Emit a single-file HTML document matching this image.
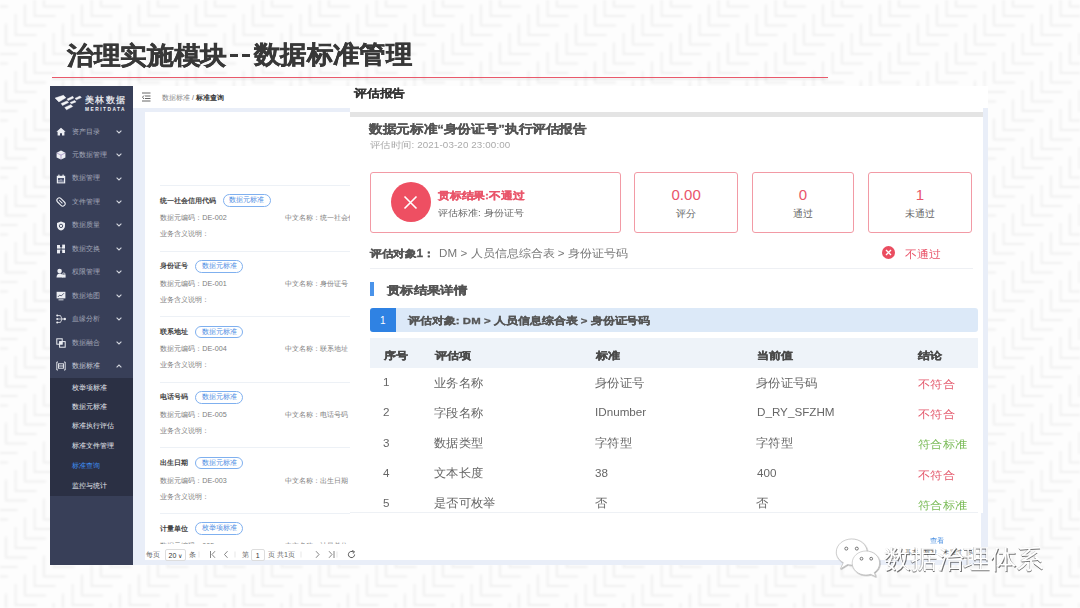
<!DOCTYPE html>
<html><head><meta charset="utf-8">
<style>
*{margin:0;padding:0;box-sizing:border-box}
html,body{width:1080px;height:608px;overflow:hidden;background:#fff;font-family:"Liberation Sans",sans-serif;position:relative}
.a{position:absolute;white-space:nowrap;line-height:1}
.b{font-weight:bold}
.bg{position:absolute;left:0;top:0}
.mi{position:absolute;left:71.5px;font-size:7px;color:#a3a8b8;line-height:1;white-space:nowrap}
.ic{position:absolute;left:55.5px}
.si{position:absolute;left:71.5px;font-size:7px;color:#e6e8ee;line-height:1;white-space:nowrap}
.it{position:absolute;left:160.3px;font-size:7px;color:#444;font-weight:bold;line-height:1;white-space:nowrap}
.tg{position:absolute;height:12.7px;border:1px solid #7fb0ef;border-radius:7px;color:#4d8de3;font-size:7px;line-height:10.7px;padding:0 5.6px;white-space:nowrap}
.gr{position:absolute;font-size:7.2px;color:#7d7d7d;line-height:1;white-space:nowrap}
.sep{position:absolute;left:160.3px;width:190px;height:1px;background:#edf1f6}
.bx{position:absolute;top:171.5px;height:61px;border:1px solid #f29aa5;border-radius:3px}
.num{position:absolute;font-size:15px;color:#e9556a;line-height:1;text-align:center;width:100%}
.lb{position:absolute;font-size:9.5px;color:#666;line-height:1;text-align:center;width:100%}
.th{position:absolute;font-size:11px;color:#444;font-weight:bold;line-height:1;white-space:nowrap}
.td{position:absolute;font-size:11.5px;color:#666;line-height:1;white-space:nowrap}
.no{color:#e45a6d}
.ok{color:#7abb57}
</style></head><body>

<svg class="bg" width="1080" height="608" viewBox="0 0 1080 608"><defs><filter id="bl"><feGaussianBlur stdDeviation="1"/></filter><pattern id="zz" x="-3.5" y="-3" width="57" height="57" patternUnits="userSpaceOnUse"><g fill="none" stroke="#f0f0f0" stroke-width="2.2"><path d="M0.0 36.0 V57.0 H21.0 M9.5 26.5 V47.5 H30.5 M19.0 17.0 V38.0 H40.0 M28.5 7.5 V28.5 H49.5 M38.0 -2.0 V19.0 H59.0 M47.5 -11.5 V9.5 H68.5" transform="translate(-57,-57)"/><path d="M0.0 36.0 V57.0 H21.0 M9.5 26.5 V47.5 H30.5 M19.0 17.0 V38.0 H40.0 M28.5 7.5 V28.5 H49.5 M38.0 -2.0 V19.0 H59.0 M47.5 -11.5 V9.5 H68.5" transform="translate(-57,0)"/><path d="M0.0 36.0 V57.0 H21.0 M9.5 26.5 V47.5 H30.5 M19.0 17.0 V38.0 H40.0 M28.5 7.5 V28.5 H49.5 M38.0 -2.0 V19.0 H59.0 M47.5 -11.5 V9.5 H68.5" transform="translate(-57,57)"/><path d="M0.0 36.0 V57.0 H21.0 M9.5 26.5 V47.5 H30.5 M19.0 17.0 V38.0 H40.0 M28.5 7.5 V28.5 H49.5 M38.0 -2.0 V19.0 H59.0 M47.5 -11.5 V9.5 H68.5" transform="translate(0,-57)"/><path d="M0.0 36.0 V57.0 H21.0 M9.5 26.5 V47.5 H30.5 M19.0 17.0 V38.0 H40.0 M28.5 7.5 V28.5 H49.5 M38.0 -2.0 V19.0 H59.0 M47.5 -11.5 V9.5 H68.5" transform="translate(0,0)"/><path d="M0.0 36.0 V57.0 H21.0 M9.5 26.5 V47.5 H30.5 M19.0 17.0 V38.0 H40.0 M28.5 7.5 V28.5 H49.5 M38.0 -2.0 V19.0 H59.0 M47.5 -11.5 V9.5 H68.5" transform="translate(0,57)"/><path d="M0.0 36.0 V57.0 H21.0 M9.5 26.5 V47.5 H30.5 M19.0 17.0 V38.0 H40.0 M28.5 7.5 V28.5 H49.5 M38.0 -2.0 V19.0 H59.0 M47.5 -11.5 V9.5 H68.5" transform="translate(57,-57)"/><path d="M0.0 36.0 V57.0 H21.0 M9.5 26.5 V47.5 H30.5 M19.0 17.0 V38.0 H40.0 M28.5 7.5 V28.5 H49.5 M38.0 -2.0 V19.0 H59.0 M47.5 -11.5 V9.5 H68.5" transform="translate(57,0)"/><path d="M0.0 36.0 V57.0 H21.0 M9.5 26.5 V47.5 H30.5 M19.0 17.0 V38.0 H40.0 M28.5 7.5 V28.5 H49.5 M38.0 -2.0 V19.0 H59.0 M47.5 -11.5 V9.5 H68.5" transform="translate(57,57)"/></g></pattern></defs><rect width="1080" height="608" fill="#fdfdfd"/><rect width="1080" height="608" fill="url(#zz)" filter="url(#bl)"/></svg>
<div class="a" style="left:67.04px;top:43.66px;font-size:24.633px;letter-spacing:0px;transform-origin:0 0;transform:scaleX(1.0663);font-weight:bold;color:#383838;-webkit-text-stroke:0.45px #383838;">治理实施模块</div>
<div class="a" style="left:253.8px;top:42.18px;font-size:25.123px;letter-spacing:0px;transform-origin:0 0;transform:scaleX(1.0543);font-weight:bold;color:#383838;-webkit-text-stroke:0.45px #383838;">数据标准管理</div>
<div class="a" style="left:230px;top:54.1px;width:7.9px;height:3.1px;background:#383838"></div>
<div class="a" style="left:241.9px;top:54.1px;width:8px;height:3.1px;background:#383838"></div>
<div class="a" style="left:52px;top:77.1px;width:776px;height:1.4px;background:#e9596b;box-shadow:0 1.5px 2px rgba(0,0,0,0.12)"></div>
<div class="a" style="left:50px;top:86px;width:83px;height:479px;background:#383f58"></div>
<div class="a" style="left:50px;top:378px;width:83px;height:118px;background:#2b3044"></div>
<div class="a" style="left:133px;top:86px;width:855px;height:22px;background:#fff"></div>
<div class="a" style="left:133px;top:108px;width:855px;height:457px;background:#e9eef8"></div>
<div class="a" style="left:144.5px;top:111.7px;width:836px;height:448.3px;background:#fff"></div>
<svg class="a" style="left:53px;top:92px" width="30" height="20" viewBox="0 0 30 20">
<g fill="#f4f5f8" stroke="#f4f5f8" stroke-width="0.5" stroke-linejoin="round">
<polygon points="2.1,6.1 10.5,3.3 12.8,5.8 5.9,9.9"/>
<polygon points="14.1,7.1 19.7,4.3 20.6,6.1 15,8.6"/>
<polygon points="22,6.4 27,4.1 28.3,5.6 23.4,7.7"/>
<polygon points="8.2,11.5 14.1,8.9 15.5,10.5 9.5,13.5"/>
<polygon points="17.1,10.5 21.7,8.4 23,9.9 18.4,11.7"/>
<polygon points="11.8,15.5 17.9,12.7 19.7,14.5 13.5,17.8"/>
</g></svg>
<div class="a" style="left:85px;top:96.4px;font-size:8.6px;letter-spacing:1.4px;color:#f2f3f6;-webkit-text-stroke:0.2px #f2f3f6">美林数据</div>
<div class="a b" style="left:85px;top:107.8px;font-size:4.8px;letter-spacing:1.5px;color:#f2f3f6">MERITDATA</div>
<div class="mi" style="top:127.7px;color:#a3a8b8">资产目录</div>
<svg class="ic" style="top:127px" width="10" height="10" viewBox="0 0 10 10"><path d="M5 0.8 L9.6 4.8 L8.4 4.8 L8.4 8.6 L6 8.6 L6 6.2 L4 6.2 L4 8.6 L1.6 8.6 L1.6 4.8 L0.4 4.8 Z" fill="#eceef3"/></svg>
<svg class="a" style="left:115.5px;top:129.8px" width="6" height="4" viewBox="0 0 6 4"><path d="M0.6 0.6 L3 3 L5.4 0.6" stroke="#d3d6de" stroke-width="1.1" fill="none"/></svg>
<div class="mi" style="top:151.0px;color:#a3a8b8">元数据管理</div>
<svg class="ic" style="top:150.3px" width="10" height="10" viewBox="0 0 10 10"><polygon points="5,0.6 9.4,2.8 9.4,7.4 5,9.6 0.6,7.4 0.6,2.8" fill="#eceef3"/><path d="M0.8 3 L5 5.1 L9.2 3 M5 5.1 L5 9.4" stroke="#8a6fb0" stroke-width="0.6" fill="none"/></svg>
<svg class="a" style="left:115.5px;top:153.10000000000002px" width="6" height="4" viewBox="0 0 6 4"><path d="M0.6 0.6 L3 3 L5.4 0.6" stroke="#d3d6de" stroke-width="1.1" fill="none"/></svg>
<div class="mi" style="top:174.39999999999998px;color:#a3a8b8">数据管理</div>
<svg class="ic" style="top:173.7px" width="10" height="10" viewBox="0 0 10 10"><rect x="0.8" y="1.8" width="8.4" height="7.6" fill="#eceef3"/><rect x="2" y="4" width="6" height="4.3" fill="#4a5270"/><rect x="2.3" y="0.6" width="1.2" height="2" fill="#eceef3"/><rect x="6.5" y="0.6" width="1.2" height="2" fill="#eceef3"/><path d="M3 7.8 L3 6 M5 7.8 L5 5.2 M7 7.8 L7 6.5" stroke="#eceef3" stroke-width="0.8"/></svg>
<svg class="a" style="left:115.5px;top:176.5px" width="6" height="4" viewBox="0 0 6 4"><path d="M0.6 0.6 L3 3 L5.4 0.6" stroke="#d3d6de" stroke-width="1.1" fill="none"/></svg>
<div class="mi" style="top:197.89999999999998px;color:#a3a8b8">文件管理</div>
<svg class="ic" style="top:197.2px" width="10" height="10" viewBox="0 0 10 10"><g transform="rotate(-45 5 5)"><rect x="2.6" y="0.2" width="4.8" height="9.6" rx="2.4" fill="none" stroke="#eceef3" stroke-width="1.1"/><path d="M5 2.5 L5 7" stroke="#eceef3" stroke-width="1"/></g></svg>
<svg class="a" style="left:115.5px;top:200.0px" width="6" height="4" viewBox="0 0 6 4"><path d="M0.6 0.6 L3 3 L5.4 0.6" stroke="#d3d6de" stroke-width="1.1" fill="none"/></svg>
<div class="mi" style="top:221.2px;color:#a3a8b8">数据质量</div>
<svg class="ic" style="top:220.5px" width="10" height="10" viewBox="0 0 10 10"><path d="M5 0.5 L9 2 L9 5 C9 7.3 7.2 8.9 5 9.6 C2.8 8.9 1 7.3 1 5 L1 2 Z" fill="#eceef3"/><circle cx="5" cy="4.9" r="1.7" fill="none" stroke="#383f58" stroke-width="0.9"/></svg>
<svg class="a" style="left:115.5px;top:223.3px" width="6" height="4" viewBox="0 0 6 4"><path d="M0.6 0.6 L3 3 L5.4 0.6" stroke="#d3d6de" stroke-width="1.1" fill="none"/></svg>
<div class="mi" style="top:244.6px;color:#a3a8b8">数据交换</div>
<svg class="ic" style="top:243.9px" width="10" height="10" viewBox="0 0 10 10"><rect x="1" y="1" width="3.6" height="3.6" fill="#eceef3"/><rect x="5.6" y="0.6" width="3.4" height="4" fill="#eceef3"/><rect x="1" y="5.6" width="3.6" height="3.8" fill="#eceef3"/><rect x="5.6" y="5.6" width="3.4" height="3.4" fill="#eceef3"/><rect x="4" y="0" width="2.2" height="3" fill="#383f58"/><rect x="4" y="6.5" width="2.2" height="3.5" fill="#383f58"/></svg>
<svg class="a" style="left:115.5px;top:246.70000000000002px" width="6" height="4" viewBox="0 0 6 4"><path d="M0.6 0.6 L3 3 L5.4 0.6" stroke="#d3d6de" stroke-width="1.1" fill="none"/></svg>
<div class="mi" style="top:268.3px;color:#a3a8b8">权限管理</div>
<svg class="ic" style="top:267.6px" width="10" height="10" viewBox="0 0 10 10"><circle cx="3.6" cy="3" r="2.3" fill="#eceef3"/><path d="M0.5 9.6 C0.5 6.5 2 5.4 3.6 5.4 C5 5.4 6 6 6.5 7 L6.5 9.6 Z" fill="#eceef3"/><rect x="6" y="6.6" width="3.6" height="3" fill="#eceef3"/><path d="M6.8 6.8 L6.8 5.6 C6.8 4.6 8.8 4.6 8.8 5.6 L8.8 6.8" stroke="#eceef3" stroke-width="0.8" fill="none"/></svg>
<svg class="a" style="left:115.5px;top:270.40000000000003px" width="6" height="4" viewBox="0 0 6 4"><path d="M0.6 0.6 L3 3 L5.4 0.6" stroke="#d3d6de" stroke-width="1.1" fill="none"/></svg>
<div class="mi" style="top:291.8px;color:#a3a8b8">数据地图</div>
<svg class="ic" style="top:291.1px" width="10" height="10" viewBox="0 0 10 10"><rect x="0.6" y="0.8" width="8.8" height="6.6" fill="#eceef3"/><path d="M1.8 6 L3.8 4 L5.2 5 L8 2.2" stroke="#383f58" stroke-width="0.8" fill="none"/><rect x="2.5" y="8.4" width="5" height="0.9" fill="#eceef3"/></svg>
<svg class="a" style="left:115.5px;top:293.90000000000003px" width="6" height="4" viewBox="0 0 6 4"><path d="M0.6 0.6 L3 3 L5.4 0.6" stroke="#d3d6de" stroke-width="1.1" fill="none"/></svg>
<div class="mi" style="top:315.0px;color:#a3a8b8">血缘分析</div>
<svg class="ic" style="top:314.3px" width="10" height="10" viewBox="0 0 10 10"><circle cx="1.2" cy="1.6" r="1" fill="#eceef3"/><circle cx="1.2" cy="5" r="1" fill="#eceef3"/><circle cx="1.2" cy="8.4" r="1" fill="#eceef3"/><circle cx="8.8" cy="5" r="1.2" fill="#eceef3"/><path d="M1.2 1.6 L4.5 1.6 L6 5 L4.5 8.4 L1.2 8.4 M1.2 5 L8.8 5" stroke="#eceef3" stroke-width="0.8" fill="none"/></svg>
<svg class="a" style="left:115.5px;top:317.1px" width="6" height="4" viewBox="0 0 6 4"><path d="M0.6 0.6 L3 3 L5.4 0.6" stroke="#d3d6de" stroke-width="1.1" fill="none"/></svg>
<div class="mi" style="top:338.5px;color:#a3a8b8">数据融合</div>
<svg class="ic" style="top:337.8px" width="10" height="10" viewBox="0 0 10 10"><rect x="0.8" y="0.8" width="5.4" height="5.4" fill="none" stroke="#eceef3" stroke-width="1"/><rect x="3.6" y="3.6" width="5.6" height="5.6" fill="none" stroke="#eceef3" stroke-width="1"/><rect x="3.6" y="3.6" width="2.6" height="2.6" fill="#eceef3"/></svg>
<svg class="a" style="left:115.5px;top:340.6px" width="6" height="4" viewBox="0 0 6 4"><path d="M0.6 0.6 L3 3 L5.4 0.6" stroke="#d3d6de" stroke-width="1.1" fill="none"/></svg>
<div class="mi" style="top:361.7px;color:#c8ccd6">数据标准</div>
<svg class="ic" style="top:361px" width="10" height="10" viewBox="0 0 10 10"><path d="M2 1 L0.8 1 L0.8 9 L2 9 M8 1 L9.2 1 L9.2 9 L8 9" stroke="#eceef3" stroke-width="0.9" fill="none"/><rect x="2.5" y="2.8" width="5" height="4.4" fill="none" stroke="#eceef3" stroke-width="0.9"/><path d="M2.5 5 L7.5 5" stroke="#eceef3" stroke-width="0.9"/></svg>
<svg class="a" style="left:115.5px;top:363.8px" width="6" height="4" viewBox="0 0 6 4"><path d="M0.6 3.4 L3 1 L5.4 3.4" stroke="#d3d6de" stroke-width="1.1" fill="none"/></svg>
<div class="si" style="top:383.9px;color:#e6e8ee">枚举项标准</div>
<div class="si" style="top:402.8px;color:#e6e8ee">数据元标准</div>
<div class="si" style="top:422.3px;color:#e6e8ee">标准执行评估</div>
<div class="si" style="top:442.3px;color:#e6e8ee">标准文件管理</div>
<div class="si" style="top:462.2px;color:#3f8ef0">标准查询</div>
<div class="si" style="top:481.59999999999997px;color:#e6e8ee">监控与统计</div>
<svg class="a" style="left:141.5px;top:92px" width="9" height="10" viewBox="0 0 9 10"><path d="M0 1 L8.5 1 M3 4 L8.5 4 M3 6.5 L8.5 6.5 M0 9 L8.5 9 M2 3.5 L0.5 5.2 L2 7" stroke="#555" stroke-width="0.9" fill="none"/></svg>
<div class="a" style="left:162px;top:94.3px;font-size:7px;color:#888">数据标准 <span style="color:#666">/</span> <span style="color:#333;font-weight:bold">标准查询</span></div>
<div class="sep" style="top:185.0px"></div>
<div class="it" style="top:196.5px">统一社会信用代码</div>
<div class="tg" style="left:222.60000000000002px;top:194.3px">数据元标准</div>
<div class="gr" style="left:160.3px;top:214.10000000000002px">数据元编码：DE-002</div>
<div class="gr" style="left:285px;top:214.10000000000002px">中文名称：统一社会信</div>
<div class="gr" style="left:160.3px;top:230.20000000000002px">业务含义说明：</div>
<div class="sep" style="top:250.6px"></div>
<div class="it" style="top:262.09999999999997px">身份证号</div>
<div class="tg" style="left:195.20000000000002px;top:259.9px">数据元标准</div>
<div class="gr" style="left:160.3px;top:279.7px">数据元编码：DE-001</div>
<div class="gr" style="left:285px;top:279.7px">中文名称：身份证号</div>
<div class="gr" style="left:160.3px;top:295.8px">业务含义说明：</div>
<div class="sep" style="top:316.2px"></div>
<div class="it" style="top:327.7px">联系地址</div>
<div class="tg" style="left:195.20000000000002px;top:325.5px">数据元标准</div>
<div class="gr" style="left:160.3px;top:345.3px">数据元编码：DE-004</div>
<div class="gr" style="left:285px;top:345.3px">中文名称：联系地址</div>
<div class="gr" style="left:160.3px;top:361.40000000000003px">业务含义说明：</div>
<div class="sep" style="top:381.79999999999995px"></div>
<div class="it" style="top:393.3px">电话号码</div>
<div class="tg" style="left:195.20000000000002px;top:391.1px">数据元标准</div>
<div class="gr" style="left:160.3px;top:410.90000000000003px">数据元编码：DE-005</div>
<div class="gr" style="left:285px;top:410.90000000000003px">中文名称：电话号码</div>
<div class="gr" style="left:160.3px;top:427.0px">业务含义说明：</div>
<div class="sep" style="top:447.4px"></div>
<div class="it" style="top:458.9px">出生日期</div>
<div class="tg" style="left:195.20000000000002px;top:456.7px">数据元标准</div>
<div class="gr" style="left:160.3px;top:476.5px">数据元编码：DE-003</div>
<div class="gr" style="left:285px;top:476.5px">中文名称：出生日期</div>
<div class="gr" style="left:160.3px;top:492.59999999999997px">业务含义说明：</div>
<div class="sep" style="top:513.0px"></div>
<div class="it" style="top:524.5px">计量单位</div>
<div class="tg" style="left:195.20000000000002px;top:522.3px">枚举项标准</div>
<div class="gr" style="left:160.3px;top:542.0999999999999px">数据元编码：005</div>
<div class="gr" style="left:285px;top:542.0999999999999px">中文名称：计量单位</div>
<div class="a" style="left:144.5px;top:543.5px;width:211px;height:16.5px;background:#fff"></div>
<div class="gr" style="left:146px;top:550.5px;color:#666">每页</div>
<div class="a" style="left:164.5px;top:548.5px;width:21px;height:12px;border:1px solid #ddd;border-radius:2px;font-size:7px;color:#333;padding:2px 0 0 3px">20 <span style="font-size:6px">&#8744;</span></div>
<div class="gr" style="left:189px;top:550.5px;color:#666">条</div>
<svg class="a" style="left:196px;top:550px" width="150" height="9" viewBox="0 0 150 9"><g fill="none" stroke="#666" stroke-width="0.8"><path d="M14.5 1 V8 M19 1.2 L16 4.5 L19 7.8 M31.5 1.2 L28.5 4.5 L31.5 7.8 M120 1.2 L123 4.5 L120 7.8 M133 1.2 L136 4.5 L133 7.8 M138 1 V8"/></g><g stroke="#ddd" stroke-width="0.7"><path d="M3 1.5 V7.5 M39 1.5 V7.5 M105 1.5 V7.5 M141 1.5 V7.5"/></g></svg>
<div class="gr" style="left:241.5px;top:550.5px;color:#666">第</div>
<div class="a" style="left:251px;top:548.5px;width:13.5px;height:12px;border:1px solid #ddd;border-radius:2px;font-size:7px;color:#333;text-align:center;padding-top:2px">1</div>
<div class="gr" style="left:268px;top:550.5px;color:#666">页 共1页</div>
<div class="a" style="left:930px;top:538.3px;font-size:6.6px;color:#4a90e2;transform-origin:0 0;transform:scaleX(1.05)">查看</div>
<div class="a" style="left:905px;top:550px;font-size:5.5px;color:#666;letter-spacing:0.5px">基本&nbsp;&nbsp;&nbsp;标准&nbsp;&nbsp;&nbsp;未通过&nbsp;&nbsp;系</div>
<svg class="a" style="left:346.5px;top:550px" width="9" height="9" viewBox="0 0 9 9"><path d="M7.6 4.5 A3.1 3.1 0 1 1 6.3 2" fill="none" stroke="#444" stroke-width="0.9"/><path d="M5.2 0.6 L7.4 1.6 L6.2 3.6" fill="none" stroke="#444" stroke-width="0.9"/></svg>
<div class="a" style="left:350px;top:85.5px;width:638px;height:22.5px;background:#fff"></div>
<div class="a" style="left:350px;top:108px;width:633px;height:4px;background:#fff"></div>
<div class="a" style="left:350px;top:112px;width:633px;height:4.5px;background:#e4e4e4"></div>
<div class="a" style="left:350px;top:116.5px;width:633px;height:396.5px;background:#fff"></div>
<div class="a" style="left:354.3px;top:88.02px;font-size:11.155px;letter-spacing:0px;transform-origin:0 0;transform:scaleX(1.1638);font-weight:bold;color:#333;-webkit-text-stroke:0.1px #333;">评估报告</div>
<div class="a" style="left:368.95px;top:122.94px;font-size:11.618px;letter-spacing:0px;transform-origin:0 0;transform:scaleX(1.1365);font-weight:bold;color:#555;-webkit-text-stroke:0.3px #555;">数据元标准“身份证号”执行评估报告</div>
<div class="a" style="left:369.5px;top:140.51px;font-size:8.501px;letter-spacing:0px;transform-origin:0 0;transform:scaleX(1.1528);color:#aaa;">评估时间<span style="letter-spacing:0.1px">: 2021-03-20 23:00:00</span></div>
<div class="bx" style="left:369.6px;width:251px"></div>
<div class="a" style="left:390.6px;top:182px;width:40px;height:40px;border-radius:50%;background:#ee4f62"></div>
<svg class="a" style="left:403px;top:194.5px" width="15" height="15"><path d="M1.5 1.5 L13.5 13.5 M13.5 1.5 L1.5 13.5" stroke="#fff" stroke-width="1.6"/></svg>
<div class="a" style="left:438.0px;top:190.83px;font-size:9.88px;letter-spacing:0px;transform-origin:0 0;transform:scaleX(1.1775);font-weight:bold;color:#e9556a;-webkit-text-stroke:0.3px #e9556a;">贯标结果<span style="letter-spacing:0.1px">:</span>不通过</div>
<div class="a" style="left:438.24px;top:209.08px;font-size:8.782px;letter-spacing:0px;transform-origin:0 0;transform:scaleX(1.1143);color:#666;">评估标准<span style="letter-spacing:0.1px">: </span>身份证号</div>
<div class="bx" style="left:634.3px;width:103.70000000000005px"><div class="num" style="top:14px">0.00</div><div class="lb" style="top:36px">评分</div></div>
<div class="bx" style="left:751.7px;width:102.59999999999991px"><div class="num" style="top:14px">0</div><div class="lb" style="top:36px">通过</div></div>
<div class="bx" style="left:868px;width:103.70000000000005px"><div class="num" style="top:14px">1</div><div class="lb" style="top:36px">未通过</div></div>
<div class="a" style="left:370.16px;top:248.84px;font-size:10.111px;letter-spacing:0px;transform-origin:0 0;transform:scaleX(1.1621);font-weight:bold;color:#555;-webkit-text-stroke:0.3px #555;">评估对象<span style="letter-spacing:0.1px">1</span>：</div>
<div class="a" style="left:438.6px;top:247.88px;font-size:10.647px;letter-spacing:0px;transform-origin:0 0;transform:scaleX(1.0881);color:#777;"><span style="letter-spacing:0.1px">DM &gt; </span>人员信息综合表<span style="letter-spacing:0.1px"> &gt; </span>身份证号码</div>
<div class="a" style="left:904.85px;top:248.6px;font-size:11.278px;letter-spacing:0px;transform-origin:0 0;transform:scaleX(1.0859);color:#e9556a;">不通过</div>
<div class="a" style="left:881.6px;top:246px;width:13.4px;height:13.4px;border-radius:50%;background:#ea4d60"></div>
<svg class="a" style="left:884.8px;top:249.2px" width="7" height="7"><path d="M1 1 L6 6 M6 1 L1 6" stroke="#fff" stroke-width="1.4"/></svg>
<div class="a" style="left:369.5px;top:268px;width:603px;height:1px;background:#eef0f4"></div>
<div class="a" style="left:369.5px;top:282.4px;width:4.4px;height:13.3px;background:#4a93ea"></div>
<div class="a" style="left:386.96px;top:285.17px;font-size:11.435px;letter-spacing:0px;transform-origin:0 0;transform:scaleX(1.2159);font-weight:bold;color:#555;-webkit-text-stroke:0.3px #555;">贯标结果详情</div>
<div class="a" style="left:369.5px;top:308.2px;width:608.4px;height:23.7px;background:#dce9f8;border-radius:3px"></div>
<div class="a" style="left:369.5px;top:308.2px;width:26.6px;height:23.7px;background:#2f82e3;border-radius:3px 0 0 3px;color:#fff;font-size:10px;text-align:center;padding-top:8.2px">1</div>
<div class="a" style="left:369.5px;top:338.4px;width:608.4px;height:29.7px;background:#eef3f9"></div>
<div class="a" style="left:408.16px;top:316.4px;font-size:9.557px;letter-spacing:0px;transform-origin:0 0;transform:scaleX(1.191);font-weight:bold;color:#555;-webkit-text-stroke:0.3px #555;">评估对象<span style="letter-spacing:0.1px">: DM &gt; </span>人员信息综合表<span style="letter-spacing:0.1px"> &gt; </span>身份证号码</div>
<div class="a" style="left:383.6px;top:350.56px;font-size:10.102px;letter-spacing:0px;transform-origin:0 0;transform:scaleX(1.2029);font-weight:bold;color:#4a4a4a;-webkit-text-stroke:0.3px #4a4a4a;">序号</div>
<div class="a" style="left:434.8px;top:350.56px;font-size:10.102px;letter-spacing:0px;transform-origin:0 0;transform:scaleX(1.2029);font-weight:bold;color:#4a4a4a;-webkit-text-stroke:0.3px #4a4a4a;">评估项</div>
<div class="a" style="left:595.6px;top:350.56px;font-size:10.102px;letter-spacing:0px;transform-origin:0 0;transform:scaleX(1.2029);font-weight:bold;color:#4a4a4a;-webkit-text-stroke:0.3px #4a4a4a;">标准</div>
<div class="a" style="left:757.0px;top:350.56px;font-size:10.102px;letter-spacing:0px;transform-origin:0 0;transform:scaleX(1.2029);font-weight:bold;color:#4a4a4a;-webkit-text-stroke:0.3px #4a4a4a;">当前值</div>
<div class="a" style="left:917.9px;top:350.56px;font-size:10.102px;letter-spacing:0px;transform-origin:0 0;transform:scaleX(1.2029);font-weight:bold;color:#4a4a4a;-webkit-text-stroke:0.3px #4a4a4a;">结论</div>
<div class="a" style="left:382.8px;top:377.29999999999995px;font-size:10.8px;color:#666;transform-origin:0 0;transform:scaleX(1.08)">1</div>
<div class="a" style="left:434.09999999999997px;top:377.5px;font-size:11.555px;letter-spacing:0px;transform-origin:0 0;transform:scaleX(1.0266);color:#666;">业务名称</div>
<div class="a" style="left:594.9px;top:377.5px;font-size:11.555px;letter-spacing:0px;transform-origin:0 0;transform:scaleX(1.0266);color:#666;">身份证号</div>
<div class="a" style="left:756.3px;top:377.5px;font-size:11.555px;letter-spacing:0px;transform-origin:0 0;transform:scaleX(1.0266);color:#666;">身份证号码</div>
<div class="a" style="left:917.5px;top:379.28px;font-size:10.744px;letter-spacing:0px;transform-origin:0 0;transform:scaleX(1.1143);color:#e45a6d;color:#e45a6d">不符合</div>
<div class="a" style="left:382.8px;top:407.4px;font-size:10.8px;color:#666;transform-origin:0 0;transform:scaleX(1.08)">2</div>
<div class="a" style="left:434.09999999999997px;top:407.6px;font-size:11.555px;letter-spacing:0px;transform-origin:0 0;transform:scaleX(1.0266);color:#666;">字段名称</div>
<div class="a" style="left:595.1px;top:407.4px;font-size:10.8px;color:#666;transform-origin:0 0;transform:scaleX(1.08)">IDnumber</div>
<div class="a" style="left:756.5px;top:407.4px;font-size:10.8px;color:#666;transform-origin:0 0;transform:scaleX(1.08)">D_RY_SFZHM</div>
<div class="a" style="left:917.5px;top:409.38px;font-size:10.744px;letter-spacing:0px;transform-origin:0 0;transform:scaleX(1.1143);color:#e45a6d;color:#e45a6d">不符合</div>
<div class="a" style="left:382.8px;top:437.49999999999994px;font-size:10.8px;color:#666;transform-origin:0 0;transform:scaleX(1.08)">3</div>
<div class="a" style="left:434.09999999999997px;top:437.7px;font-size:11.555px;letter-spacing:0px;transform-origin:0 0;transform:scaleX(1.0266);color:#666;">数据类型</div>
<div class="a" style="left:594.9px;top:437.7px;font-size:11.555px;letter-spacing:0px;transform-origin:0 0;transform:scaleX(1.0266);color:#666;">字符型</div>
<div class="a" style="left:756.3px;top:437.7px;font-size:11.555px;letter-spacing:0px;transform-origin:0 0;transform:scaleX(1.0266);color:#666;">字符型</div>
<div class="a" style="left:917.5px;top:439.47999999999996px;font-size:10.744px;letter-spacing:0px;transform-origin:0 0;transform:scaleX(1.1143);color:#e45a6d;color:#7abb57">符合标准</div>
<div class="a" style="left:382.8px;top:467.59999999999997px;font-size:10.8px;color:#666;transform-origin:0 0;transform:scaleX(1.08)">4</div>
<div class="a" style="left:434.09999999999997px;top:467.8px;font-size:11.555px;letter-spacing:0px;transform-origin:0 0;transform:scaleX(1.0266);color:#666;">文本长度</div>
<div class="a" style="left:595.1px;top:467.59999999999997px;font-size:10.8px;color:#666;transform-origin:0 0;transform:scaleX(1.08)">38</div>
<div class="a" style="left:756.5px;top:467.59999999999997px;font-size:10.8px;color:#666;transform-origin:0 0;transform:scaleX(1.08)">400</div>
<div class="a" style="left:917.5px;top:469.58px;font-size:10.744px;letter-spacing:0px;transform-origin:0 0;transform:scaleX(1.1143);color:#e45a6d;color:#e45a6d">不符合</div>
<div class="a" style="left:382.8px;top:497.69999999999993px;font-size:10.8px;color:#666;transform-origin:0 0;transform:scaleX(1.08)">5</div>
<div class="a" style="left:434.09999999999997px;top:497.9px;font-size:11.555px;letter-spacing:0px;transform-origin:0 0;transform:scaleX(1.0266);color:#666;">是否可枚举</div>
<div class="a" style="left:594.9px;top:497.9px;font-size:11.555px;letter-spacing:0px;transform-origin:0 0;transform:scaleX(1.0266);color:#666;">否</div>
<div class="a" style="left:756.3px;top:497.9px;font-size:11.555px;letter-spacing:0px;transform-origin:0 0;transform:scaleX(1.0266);color:#666;">否</div>
<div class="a" style="left:917.5px;top:499.67999999999995px;font-size:10.744px;letter-spacing:0px;transform-origin:0 0;transform:scaleX(1.1143);color:#e45a6d;color:#7abb57">符合标准</div>
<div class="a" style="left:350px;top:512px;width:628px;height:1px;background:#eef1f5"></div>
<div class="a" id="wm" style="left:884px;top:546.5px;font-size:25.5px;color:#fff;transform-origin:0 0;transform:scaleX(1.02);text-shadow:0.6px 0.6px 0.6px rgba(0,0,0,0.55), -0.3px -0.3px 0.4px rgba(0,0,0,0.18)">数据治理体系</div>
<svg class="a" style="left:830px;top:530px" width="60" height="55" viewBox="0 0 60 55">
<defs><filter id="sh" x="-20%" y="-20%" width="140%" height="140%"><feDropShadow dx="0.5" dy="0.6" stdDeviation="0.4" flood-color="#000" flood-opacity="0.45"/></filter></defs>
<g filter="url(#sh)" fill="#fff" stroke="#b5b5b5" stroke-width="0.6">
<path d="M21.7 9 C30.2 9 37.1 14.8 37.1 22 C37.1 29.2 30.2 35 21.7 35 C20.2 35 18.8 34.8 17.5 34.5 L10.5 38.8 L13.3 32.6 C9 30.2 6.3 26.4 6.3 22 C6.3 14.8 13.2 9 21.7 9 Z"/>
<path d="M35.9 21 C43.5 21 49.6 26.4 49.6 33 C49.6 36.9 47.5 40.3 44.2 42.5 L45.8 46.6 L40.6 44.3 C39.1 44.8 37.5 45 35.9 45 C28.3 45 22.2 39.6 22.2 33 C22.2 26.4 28.3 21 35.9 21 Z"/>
</g>
<g fill="#fff" stroke="#555" stroke-width="0.8">
<circle cx="16.3" cy="18.6" r="1.5"/><circle cx="26.8" cy="18.6" r="1.5"/><circle cx="31.5" cy="28.7" r="1.4"/><circle cx="41.2" cy="28.7" r="1.4"/>
</g></svg>
</body></html>
